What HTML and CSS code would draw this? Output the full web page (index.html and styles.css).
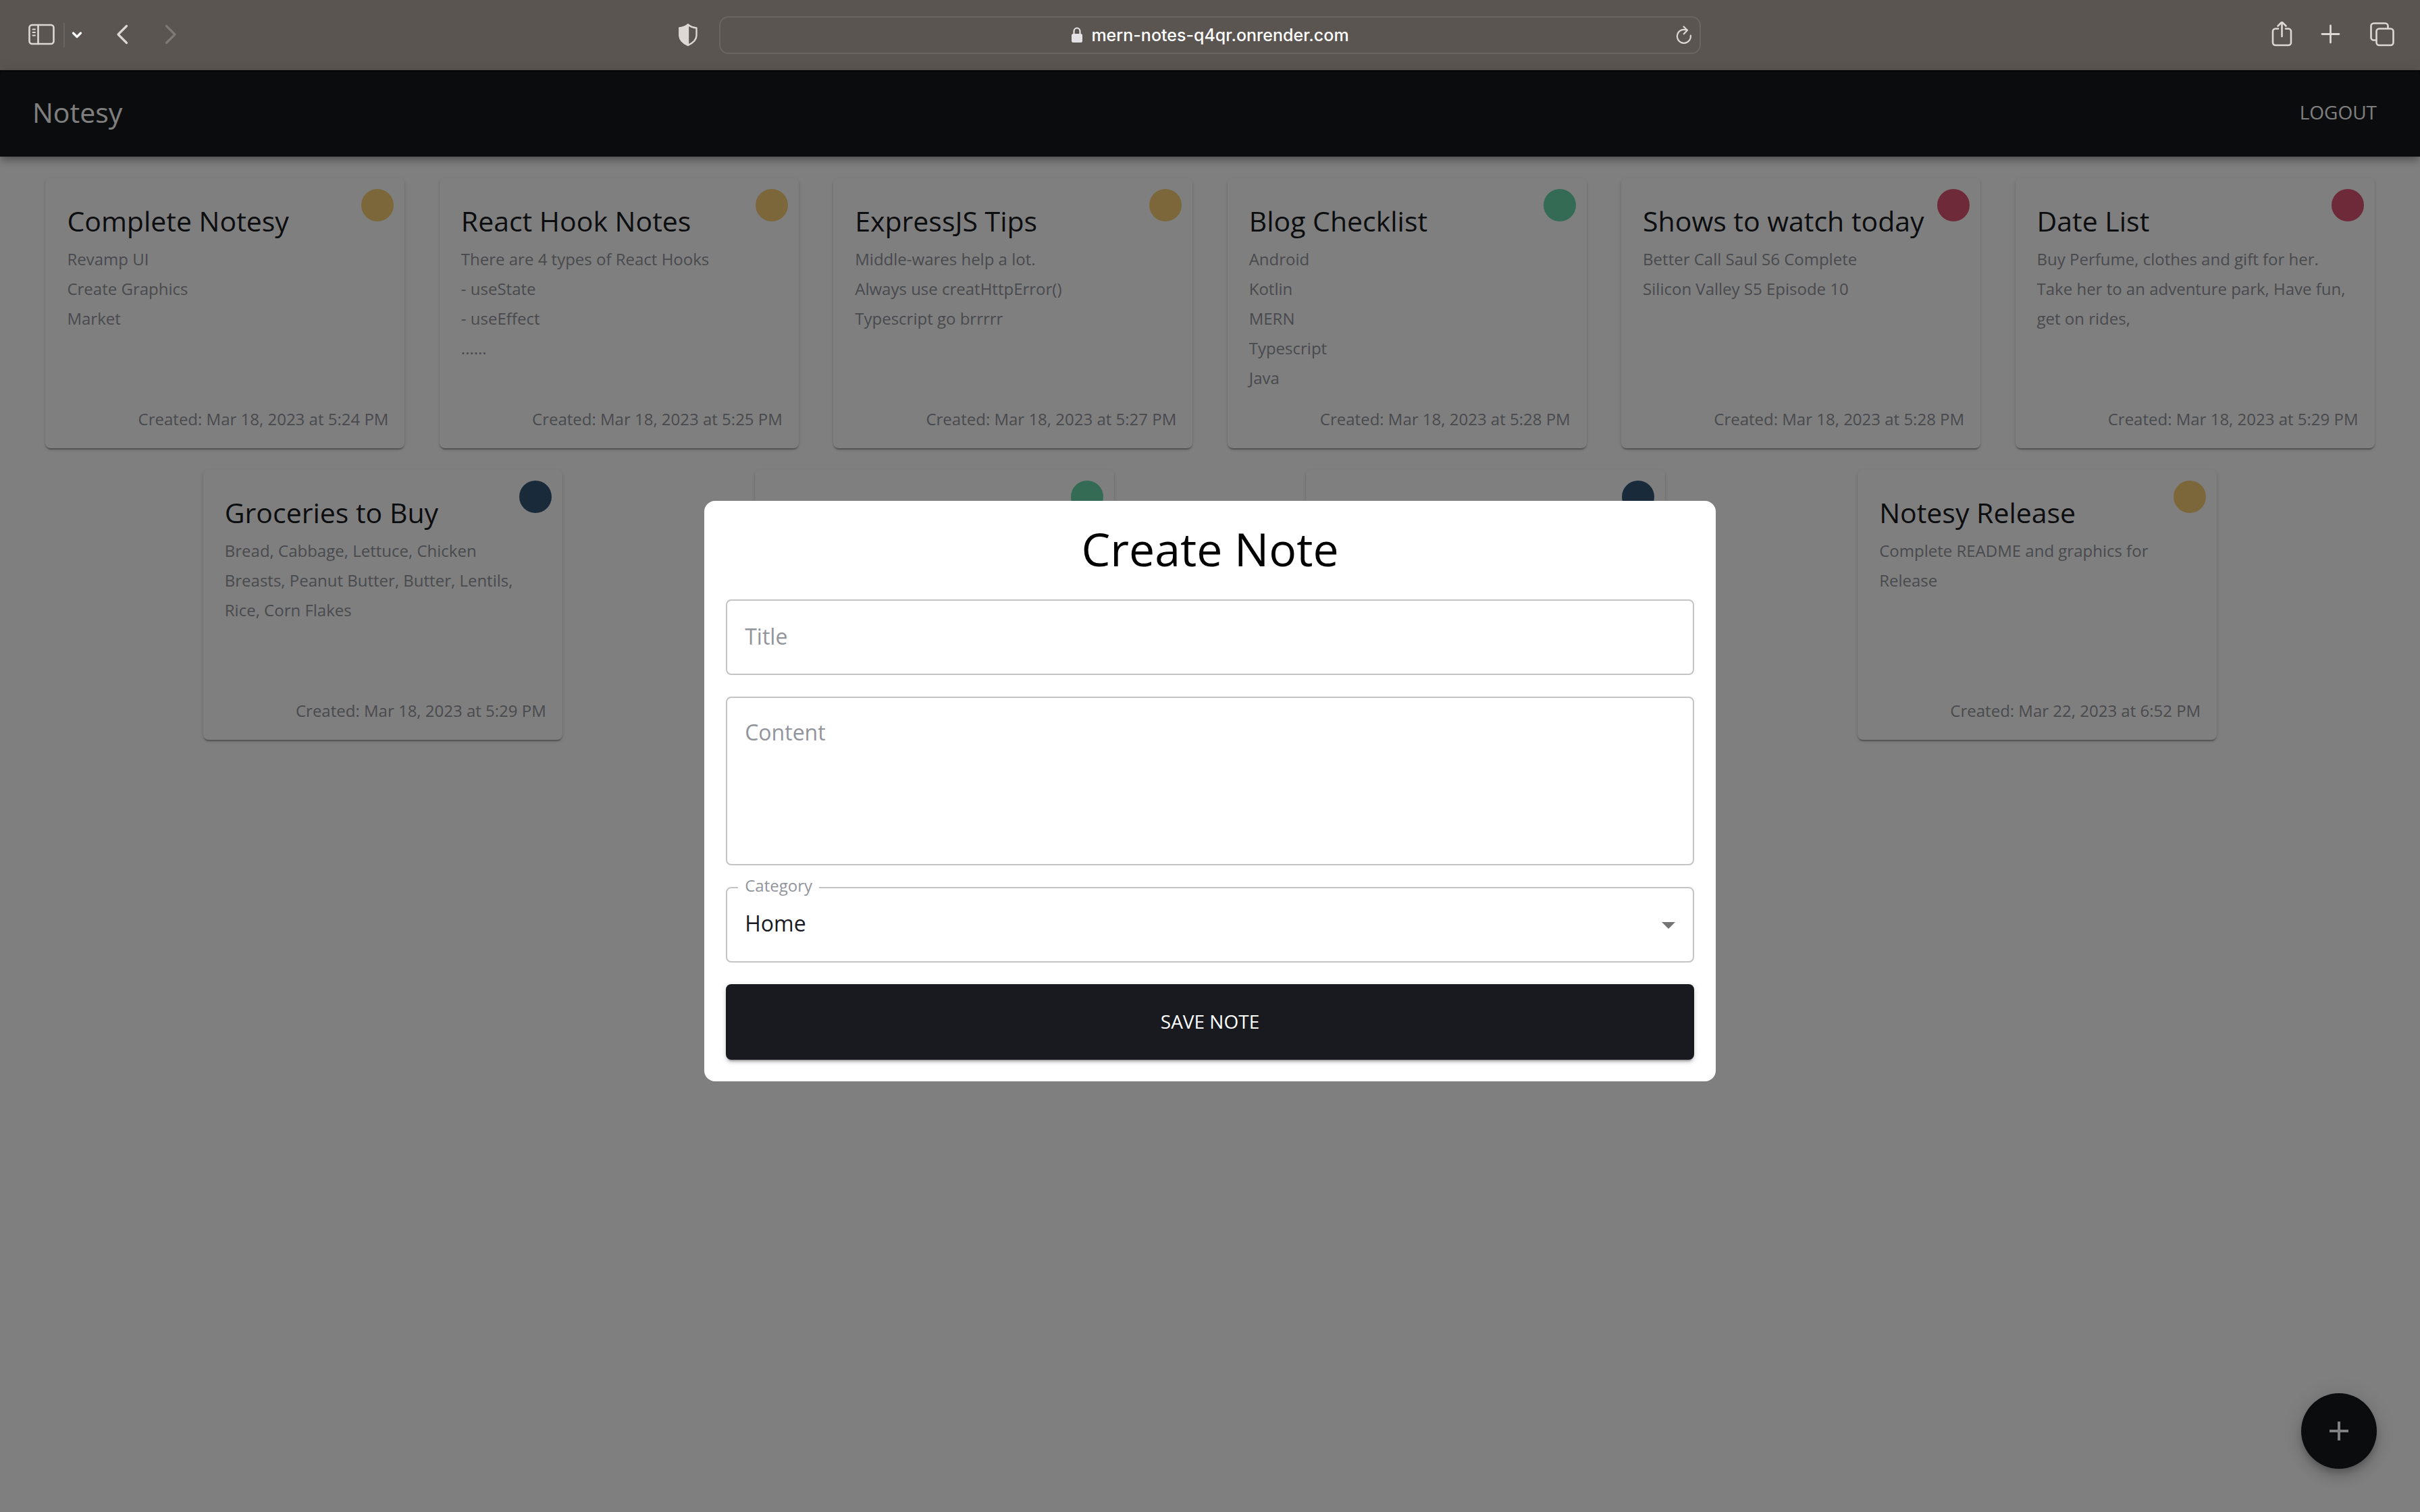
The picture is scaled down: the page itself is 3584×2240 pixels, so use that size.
FILE: index.html
```html
<!DOCTYPE html>
<html lang="en">
<head>
<meta charset="utf-8">
<title>Notesy</title>
<link rel="stylesheet" href="styles.css">
</head>
<body>
<header class="browser">
  <div class="browser-side">
    <div class="sidebar-group">
      <button class="icon-button" aria-label="Sidebar">
        <svg width="44" height="40" viewBox="0 0 44 40" fill="none" stroke="currentColor" stroke-width="2.6" stroke-linecap="round"><rect x="3.5" y="5" width="36" height="28" rx="4"/><path d="M16.5 5v28"/><path stroke-width="2" d="M8.500 11.500h3.500M8.500 16h3.500M8.500 20.500h3.500"/></svg>
      </button>
      <span class="divider"></span>
      <button class="icon-button icon-bright" aria-label="Tab groups">
        <svg width="16" height="40" viewBox="0 0 16 40" fill="none" stroke="currentColor" stroke-width="3.200" stroke-linecap="round" stroke-linejoin="round"><path d="M2.500 17l5.500 5.500L13.500 17"/></svg>
      </button>
    </div>
    <div class="history-group">
      <button class="icon-button" aria-label="Back">
        <svg width="18" height="40" viewBox="0 0 18 40" fill="none" stroke="currentColor" stroke-width="3.200" stroke-linecap="round" stroke-linejoin="round"><path d="M15.500 6.500L3 19l12.500 12.500"/></svg>
      </button>
      <button class="icon-button icon-dim" aria-label="Forward">
        <svg width="18" height="40" viewBox="0 0 18 40" fill="none" stroke="currentColor" stroke-width="3.200" stroke-linecap="round" stroke-linejoin="round"><path d="M2.500 6.500L15 19 2.500 31.500"/></svg>
      </button>
    </div>
    <button class="icon-button privacy" aria-label="Privacy report">
      <svg width="32" height="40" viewBox="0 0 32 40" fill="none" stroke="currentColor" stroke-width="2.400" stroke-linejoin="round"><path d="M16 4.500c3.500 3 8 4.500 12.500 5v11c0 6.500-5 11-12.500 14.500C8.500 31.500 3.500 27 3.500 20.500v-11C8 9 12.500 7.500 16 4.500z"/><path fill="currentColor" d="M16 4.500V35C8.500 31.500 3.500 27 3.500 20.500v-11C8 9 12.500 7.500 16 4.500z"/></svg>
    </button>
  </div>
  <div class="address">
    <svg class="lock" width="18" height="24" viewBox="0 0 18 24"><rect x="1" y="10" width="16" height="13" rx="2.500" fill="currentColor"/><path d="M4.500 10V6.500a4.500 5 0 0 1 9 0V10" fill="none" stroke="currentColor" stroke-width="2.200"/></svg>
    <span class="url">mern-notes-q4qr.onrender.com</span>
    <button class="icon-button reload" aria-label="Reload">
      <svg width="26" height="30" viewBox="0 0 26 30" fill="none" stroke="currentColor" stroke-width="2.200" stroke-linecap="round" stroke-linejoin="round"><path d="M16.500 7.500A10 10 0 1 0 22.800 15.500"/><path d="M12.500 2.500l5.500 5.300-5.300 5.400"/></svg>
    </button>
  </div>
  <div class="browser-side browser-side-end">
    <button class="icon-button" aria-label="Share">
      <svg width="32" height="40" viewBox="0 0 32 40" fill="none" stroke="currentColor" stroke-width="2.600" stroke-linecap="round" stroke-linejoin="round"><path d="M10 10.500H6a4 4 0 0 0-4 4V31a4 4 0 0 0 4 4h19a4 4 0 0 0 4-4V14.500a4 4 0 0 0-4-4h-4"/><path d="M15.500 22V1M9.500 6.500l6-6 6 6"/></svg>
    </button>
    <button class="icon-button" aria-label="New tab">
      <svg width="32" height="40" viewBox="0 0 32 40" fill="none" stroke="currentColor" stroke-width="2.800" stroke-linecap="round"><path d="M15.500 6v25M3 18.500h25"/></svg>
    </button>
    <button class="icon-button" aria-label="Tab overview">
      <svg width="40" height="40" viewBox="0 0 40 40" fill="none" stroke="currentColor" stroke-width="2.600" stroke-linejoin="round"><rect x="11.500" y="10.500" width="25" height="24.500" rx="4"/><path d="M11.500 27.500H7.500a4 4 0 0 1-4-4v-17a4 4 0 0 1 4-4h17a4 4 0 0 1 4 4v4"/></svg>
    </button>
  </div>
</header>

<div class="app">
  <nav class="appbar">
    <a class="brand" href="#">Notesy</a>
    <button class="logout">LOGOUT</button>
  </nav>

  <main class="notes">
    <article class="note"><span class="dot dot-yellow"></span><h2>Complete Notesy</h2><p class="note-body">Revamp UI<br>Create Graphics<br>Market</p><p class="note-date">Created: Mar 18, 2023 at 5:24 PM</p></article>
    <article class="note"><span class="dot dot-yellow"></span><h2>React Hook Notes</h2><p class="note-body">There are 4 types of React Hooks<br>- useState<br>- useEffect<br>......</p><p class="note-date">Created: Mar 18, 2023 at 5:25 PM</p></article>
    <article class="note"><span class="dot dot-yellow"></span><h2>ExpressJS Tips</h2><p class="note-body">Middle-wares help a lot.<br>Always use creatHttpError()<br>Typescript go brrrrr</p><p class="note-date">Created: Mar 18, 2023 at 5:27 PM</p></article>
    <article class="note"><span class="dot dot-green"></span><h2>Blog Checklist</h2><p class="note-body">Android<br>Kotlin<br>MERN<br>Typescript<br>Java</p><p class="note-date">Created: Mar 18, 2023 at 5:28 PM</p></article>
    <article class="note"><span class="dot dot-red"></span><h2>Shows to watch today</h2><p class="note-body">Better Call Saul S6 Complete<br>Silicon Valley S5 Episode 10</p><p class="note-date">Created: Mar 18, 2023 at 5:28 PM</p></article>
    <article class="note"><span class="dot dot-red"></span><h2>Date List</h2><p class="note-body">Buy Perfume, clothes and gift for her. Take her to an adventure park, Have fun, get on rides,</p><p class="note-date">Created: Mar 18, 2023 at 5:29 PM</p></article>
    <article class="note"><span class="dot dot-navy"></span><h2>Groceries to Buy</h2><p class="note-body">Bread, Cabbage, Lettuce, Chicken Breasts, Peanut Butter, Butter, Lentils, Rice, Corn Flakes</p><p class="note-date">Created: Mar 18, 2023 at 5:29 PM</p></article>
    <article class="note"><span class="dot dot-green"></span></article>
    <article class="note"><span class="dot dot-navy"></span></article>
    <article class="note"><span class="dot dot-yellow"></span><h2>Notesy Release</h2><p class="note-body">Complete README and graphics for Release</p><p class="note-date">Created: Mar 22, 2023 at 6:52 PM</p></article>
  </main>

  <button class="fab" aria-label="Add note">
    <svg width="48" height="48" viewBox="0 0 24 24" fill="currentColor"><path d="M19 13h-6v6h-2v-6H5v-2h6V5h2v6h6v2z"/></svg>
  </button>

  <div class="backdrop">
    <form class="dialog" role="dialog" aria-labelledby="dialog-title">
      <h1 id="dialog-title">Create Note</h1>
      <input class="field" type="text" aria-label="Title" placeholder="Title">
      <textarea class="field field-area" aria-label="Content" placeholder="Content"></textarea>
      <div class="select-wrap">
        <label for="category">Category</label>
        <select class="field" id="category"><option>Home</option></select>
        <svg class="arrow" width="48" height="48" viewBox="0 0 24 24" fill="currentColor"><path d="M7 10l5 5 5-5z"/></svg>
      </div>
      <button class="save" type="button">SAVE NOTE</button>
    </form>
  </div>
</div>
</body>
</html>
```

FILE: styles.css
```css
* {
  box-sizing: border-box;
}

body {
  margin: 0;
  min-height: 100vh;
  display: flex;
  flex-direction: column;
  font-family: "Open Sans", sans-serif;
  background: #fff;
  color: #191a1f;
}

h1,
h2,
p {
  margin: 0;
}

button,
input,
textarea,
select {
  font: inherit;
  color: inherit;
}

svg {
  display: block;
}

/* Browser toolbar */
.browser {
  display: grid;
  grid-template-columns: 1fr minmax(0, 1454px) 1fr;
  align-items: center;
  height: 104px;
  background: #5b5551;
  color: #ddd8d4;
}

.browser-side {
  display: flex;
  align-items: center;
  gap: 50px;
  padding-left: 40px;
}

.browser-side-end {
  justify-content: flex-end;
  gap: 40px;
  padding: 0 36px 0 0;
}

.icon-button {
  padding: 0;
  border: 0;
  background: none;
}

.icon-bright {
  color: #fff;
}

.icon-dim {
  color: #7f7a76;
}

.sidebar-group {
  display: flex;
  align-items: center;
  gap: 10px;
}

.divider {
  width: 2px;
  height: 36px;
  background: #6b6562;
}

.history-group {
  display: flex;
  gap: 54px;
}

.privacy {
  margin: 0 30px 0 auto;
}

.address {
  position: relative;
  display: flex;
  align-items: center;
  justify-content: center;
  gap: 12px;
  height: 56px;
  border: 2px solid #6b6564;
  border-radius: 14px;
}

.lock {
  color: #e4e2e4;
}

.url {
  font: 500 25px/32px Inter, sans-serif;
  color: #fff;
}

.reload {
  position: absolute;
  right: 10px;
}

/* Application */
.app {
  position: relative;
  flex: 1;
}

.appbar {
  display: flex;
  align-items: center;
  justify-content: space-between;
  height: 128px;
  padding: 0 48px 4px;
  background: #17181d;
  color: #fff;
  box-shadow: inset 0 2px 2px rgba(0, 0, 0, 0.6), 0 4px 8px -2px rgba(0, 0, 0, 0.2), 0 8px 10px rgba(0, 0, 0, 0.14), 0 2px 20px rgba(0, 0, 0, 0.12);
}

.brand {
  font-size: 41px;
  line-height: 64px;
  color: inherit;
  text-decoration: none;
}

.logout {
  padding: 0 16px;
  border: 0;
  background: none;
  font-size: 28px;
  line-height: 48px;
}

.notes {
  display: flex;
  flex-wrap: wrap;
  justify-content: space-evenly;
  gap: 32px 0;
  padding: 32px 16px;
}

.note {
  position: relative;
  display: flex;
  flex-direction: column;
  width: 532px;
  height: 400px;
  padding: 32px 24px 24px 32px;
  border-radius: 8px;
  background: #fff;
  box-shadow: 0 4px 2px -2px rgba(0, 0, 0, 0.2), 0 2px 2px rgba(0, 0, 0, 0.14), 0 2px 6px rgba(0, 0, 0, 0.12);
}

.note h2 {
  font-size: 41px;
  font-weight: 500;
  line-height: 62px;
  white-space: nowrap;
}

.note-body {
  font-size: 24px;
  line-height: 44px;
  padding: 4px 8px 0 0;
  color: #92949c;
}

.note-date {
  margin-top: auto;
  font-size: 24px;
  line-height: 38px;
  text-align: right;
  color: #92949c;
}

.dot {
  position: absolute;
  top: 16px;
  right: 16px;
  width: 48px;
  height: 48px;
  border-radius: 50%;
}

.dot-yellow {
  background: #f8ce74;
}

.dot-green {
  background: #66d6aa;
}

.dot-red {
  background: #dc5470;
}

.dot-navy {
  background: #325476;
}

.fab {
  position: absolute;
  right: 64px;
  bottom: 64px;
  display: grid;
  place-items: center;
  width: 112px;
  height: 112px;
  padding: 0;
  border: 0;
  border-radius: 50%;
  background: #17181d;
  color: #fff;
  box-shadow: 0 6px 10px -2px rgba(0, 0, 0, 0.2), 0 12px 20px rgba(0, 0, 0, 0.14), 0 2px 36px rgba(0, 0, 0, 0.12);
}

/* Create note dialog */
.backdrop {
  position: absolute;
  inset: 0;
  display: flex;
  align-items: center;
  justify-content: center;
  background: rgba(0, 0, 0, 0.5);
}

.dialog {
  box-sizing: content-box;
  display: flex;
  flex-direction: column;
  gap: 32px;
  width: 40%;
  padding: 32px;
  border-radius: 16px;
  background: #fff;
}

.dialog h1 {
  padding-bottom: 4px;
  font-size: 68px;
  font-weight: 400;
  line-height: 78px;
  text-align: center;
  color: #000;
}

.field {
  display: block;
  width: 100%;
  height: 112px;
  padding: 0 26px 4px;
  border: 2px solid #c4c4c4;
  border-radius: 8px;
  background: #fff;
  font-size: 32px;
  line-height: 46px;
  appearance: none;
}

.field::placeholder {
  color: #92949c;
  opacity: 1;
}

.field-area {
  height: 250px;
  padding: 28px 26px;
  resize: none;
}

.select-wrap {
  position: relative;
}

.select-wrap label {
  position: absolute;
  top: -20px;
  left: 18px;
  padding: 0 10px;
  background: #fff;
  font-size: 24px;
  line-height: 36px;
  color: #92949c;
}

.arrow {
  position: absolute;
  top: 32px;
  right: 14px;
  color: #757575;
  pointer-events: none;
}

.save {
  height: 112px;
  padding: 0 0 2px;
  border: 0;
  border-radius: 8px;
  background: #191a1f;
  color: #fff;
  font-size: 28px;
  box-shadow: 0 6px 2px -4px rgba(0, 0, 0, 0.2), 0 4px 4px rgba(0, 0, 0, 0.14), 0 2px 10px rgba(0, 0, 0, 0.12);
}
```
